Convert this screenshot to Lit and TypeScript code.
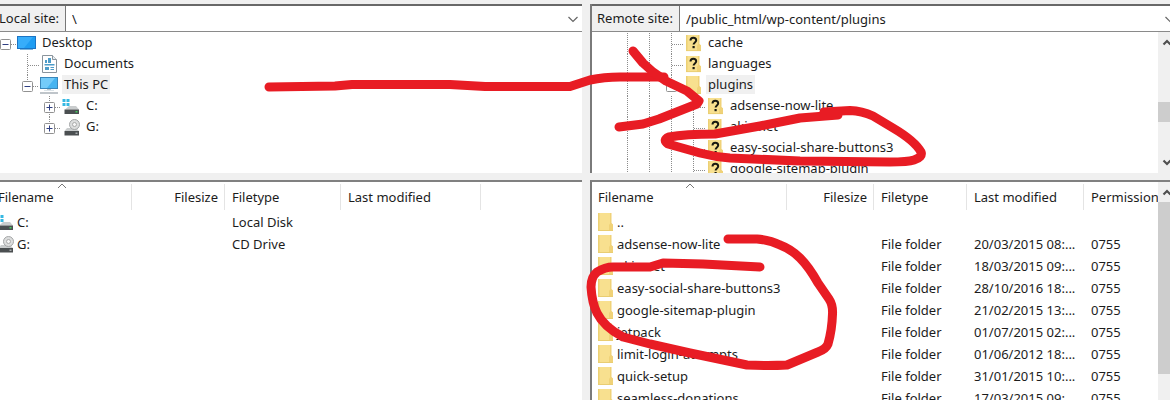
import { LitElement, html, svg, css, nothing } from "lit";
import { customElement, property } from "lit/decorators.js";

type Guide = "blank" | "line" | "tee" | "root" | "minus" | "plus" | "plus-last";
type Icon = "monitor" | "document" | "pc" | "disk" | "cd" | "folder" | "unknown";

interface Node {
  guides: Guide[];
  icon: Icon;
  name: string;
  selected?: boolean;
}

interface Entry {
  icon: Icon;
  name: string;
  size?: string;
  type?: string;
  modified?: string;
  permissions?: string;
}

const LOCAL_TREE: Node[] = [
  { guides: ["root"], icon: "monitor", name: "Desktop" },
  { guides: ["blank", "tee"], icon: "document", name: "Documents" },
  { guides: ["blank", "minus"], icon: "pc", name: "This PC", selected: true },
  { guides: ["blank", "blank", "plus"], icon: "disk", name: "C:" },
  { guides: ["blank", "blank", "plus-last"], icon: "cd", name: "G:" },
];

const REMOTE_TREE: Node[] = [
  { guides: ["blank", "line", "line", "tee"], icon: "unknown", name: "cache" },
  { guides: ["blank", "line", "line", "tee"], icon: "unknown", name: "languages" },
  { guides: ["blank", "line", "line", "minus"], icon: "folder", name: "plugins", selected: true },
  { guides: ["blank", "line", "line", "line", "tee"], icon: "unknown", name: "adsense-now-lite" },
  { guides: ["blank", "line", "line", "line", "tee"], icon: "unknown", name: "akismet" },
  { guides: ["blank", "line", "line", "line", "tee"], icon: "unknown", name: "easy-social-share-buttons3" },
  { guides: ["blank", "line", "line", "line", "tee"], icon: "unknown", name: "google-sitemap-plugin" },
];

const LOCAL_FILES: Entry[] = [
  { icon: "disk", name: "C:", type: "Local Disk" },
  { icon: "cd", name: "G:", type: "CD Drive" },
];

const dir = (name: string, modified: string): Entry => ({
  icon: "folder", name, type: "File folder", modified, permissions: "0755",
});

const REMOTE_FILES: Entry[] = [
  { icon: "folder", name: ".." },
  dir("adsense-now-lite", "20/03/2015 08:..."),
  dir("akismet", "18/03/2015 09:..."),
  dir("easy-social-share-buttons3", "28/10/2016 18:..."),
  dir("google-sitemap-plugin", "21/02/2015 13:..."),
  dir("jetpack", "01/07/2015 02:..."),
  dir("limit-login-attempts", "01/06/2012 18:..."),
  dir("quick-setup", "31/01/2015 10:..."),
  dir("seamless-donations", "17/03/2015 09:..."),
];

const folderShape = svg`
  <path d="M3 1h13v10l2 2v6H3z" fill="#f8e08f"/>
  <path d="M3 1h1.500v18H3z" fill="#ecd074"/>
  <path d="M15 1h1.500v10l1.500 1.500v6.500h-4v-6l1-1.500z" fill="#f0d278"/>
  <path d="M3 18h15v1H3z" fill="#e9cd72"/>`;

const ICONS: Record<Icon, unknown> = {
  monitor: svg`
    <path d="M0 3h19v13H0z" fill="#1b74c4"/>
    <path d="M1 4h17v11H1z" fill="#1f9df2"/>
    <path d="M1 4h15L7 15H1z" fill="#37adfa"/>
    <path d="M3 16h13v1H3z" fill="#7db4dc"/>`,
  document: svg`
    <path d="M3.500 1.500h10l4 4v13h-14z" fill="#fff" stroke="#8a949c"/>
    <path d="M13.500 1.500v4h4" fill="#e8edf0" stroke="#8a949c"/>
    <path d="M9 4h3v5H9zM6 6h2v3H6zM5.500 10h10v1.500h-10zM6 13h4v3H6zM11.500 13h3.500v1h-3.500zM11.500 15h3.500v1h-3.500z" fill="#4d9cc9"/>`,
  pc: svg`
    <path d="M1 2h18v12H1z" fill="#3a87bb"/>
    <path d="M2 3h16v10H2z" fill="#46b4f1"/>
    <path d="M2 3h14L8 13H2z" fill="#74cbf9"/>
    <path d="M8 14h4v1.500H8z" fill="#b9c6ce"/>
    <path d="M5 15h10v1H5z" fill="#dbe3e8"/>
    <path d="M1 17.500h18v1H1z" fill="#7f8b94"/>`,
  disk: svg`
    <path d="M1.500 3h3v3h-3zM5.500 3h3v3h-3zM1.500 7h3v3h-3zM5.500 7h3v3h-3z" fill="#35b8e2"/>
    <path d="M8 10h7l3 3.500H4z" fill="#c9cccd"/>
    <path d="M3.500 13.500H18V18H3.500z" fill="#4b4f51"/>
    <path d="M14.500 15h2v1.500h-2z" fill="#45c95b"/>`,
  cd: svg`
    <path d="M6 11h9l3 3H3.500z" fill="#c9cccd"/>
    <circle cx="13.500" cy="7.500" r="5" fill="#dcdddd" stroke="#a5a7a8"/>
    <circle cx="13.500" cy="7.500" r="2" fill="#f7f7f7" stroke="#aaa"/>
    <path d="M3.500 14H18v4.500H3.500z" fill="#4b4f51"/>
    <path d="M14.500 15.500h2V17h-2z" fill="#a8adaf"/>`,
  folder: folderShape,
  unknown: svg`<g transform="translate(0 1) scale(1 .9)">${folderShape}</g>
    <path d="M7.500 7.500C7.500 5.400 8.700 4.700 10.300 4.700c1.800 0 2.900 1 2.900 2.500 0 2.200-2.600 2.300-2.600 4.300" fill="none" stroke="#1a1a12" stroke-width="2"/>
    <path d="M9.500 13h2.200v2.200H9.500z" fill="#1a1a12"/>`,
};

const icon = (name: Icon) =>
  html`<svg class="icon" viewBox="0 0 20 20" aria-hidden="true">${ICONS[name]}</svg>`;

const dots = (d: string) =>
  svg`<path d=${d} fill="none" stroke="#8c8c8c" stroke-dasharray="1 1"/>`;

const box = (plus: boolean) => svg`
  <rect x="6.500" y="6.500" width="10" height="10" rx="1" fill="#fff" stroke="#919191"/>
  <path d=${plus ? "M8.500 11.500h6M11.500 8.500v6" : "M8.500 11.500h6"} stroke="#2f3f82" fill="none"/>`;

const GUIDES: Record<Guide, unknown> = {
  blank: nothing,
  line: dots("M11.500 0v21"),
  tee: svg`${dots("M11.500 0v21")}${dots("M12 11.500h11")}`,
  root: svg`${dots("M17 11.500h5")}${box(false)}`,
  minus: svg`${dots("M11.500 0v6")}${dots("M17 11.500h6")}${box(false)}`,
  plus: svg`${dots("M11.500 0v21")}${dots("M17 11.500h6")}${box(true)}`,
  "plus-last": svg`${dots("M11.500 0v6")}${dots("M17 11.500h6")}${box(true)}`,
};

const chevron = html`<svg class="chevron" viewBox="0 0 12 12" aria-hidden="true">
  <path d="M1.500 4l4.500 4.500L10.500 4" fill="none" stroke="#666" stroke-width="1.200"/></svg>`;

const arrow = (up: boolean) => html`<svg class="arrow" viewBox="0 0 18 20" aria-hidden="true">
  <path d=${up ? "M5.500 12.500l3.500-3.500 3.500 3.500" : "M5.500 7.500L9 11l3.500-3.500"} fill="none" stroke="#505050" stroke-width="2.200"/></svg>`;

@customElement("site-bar")
class SiteBar extends LitElement {
  @property() label = "";
  @property() path = "";

  static styles = css`
    :host { display: flex; height: 25px; border-top: 2px solid #686868; border-bottom: 1px solid #8a8a8a; background: #fff; }
    label { flex: none; padding: 0 6px 0 var(--label-inset, 5px); background: #f0f0f0; border-right: 1px solid #777; line-height: 25px; }
    .combo { flex: 1; display: grid; align-items: center; min-width: 0; }
    .combo > * { grid-area: 1 / 1; }
    select { width: 100%; height: 25px; padding: 0 24px 0 6px; border: 0; outline: 0; appearance: none; background: transparent; color: inherit; font: inherit; }
    .chevron { width: 12px; height: 12px; justify-self: end; margin-right: var(--chevron-inset, 3px); pointer-events: none; }
  `;

  render() {
    return html`
      <label for="path">${this.label}</label>
      <div class="combo">
        <select id="path"><option>${this.path}</option></select>
        ${chevron}
      </div>`;
  }
}

@customElement("folder-tree")
class FolderTree extends LitElement {
  @property({ attribute: false }) nodes: Node[] = [];

  static styles = css`
    :host { display: block; overflow: hidden; }
    ul { margin: 0; padding: 1px 0 0; list-style: none; }
    li { display: flex; align-items: flex-start; height: 21px; margin-left: var(--tree-inset, 0); white-space: nowrap; }
    .guide { flex: none; width: 22px; height: 21px; overflow: visible; display: block; }
    button { flex: none; padding: 0; border: 0; background: none; }
    .icon { flex: none; width: 20px; height: 20px; margin-left: 1px; margin-right: 3px; }
    .name { padding: 0 2px; line-height: 19px; }
    .selected { background: #f0f0f0; }
  `;

  private guide(g: Guide) {
    const drawing = html`<svg class="guide" viewBox="0 0 22 21" aria-hidden="true">${GUIDES[g]}</svg>`;
    return ["root", "minus", "plus", "plus-last"].includes(g)
      ? html`<button aria-label=${g.startsWith("plus") ? "Expand" : "Collapse"}>${drawing}</button>`
      : drawing;
  }

  render() {
    return html`<ul role="tree">
      ${this.nodes.map((n) => html`<li role="treeitem" aria-selected=${n.selected ? "true" : "false"}>
        ${n.guides.map((g) => this.guide(g))}${icon(n.icon)}
        <span class="name ${n.selected ? "selected" : ""}">${n.name}</span>
      </li>`)}
    </ul>`;
  }
}

@customElement("file-list")
class FileList extends LitElement {
  @property({ attribute: false }) entries: Entry[] = [];
  @property({ type: Boolean }) remote = false;

  static styles = css`
    :host { display: block; overflow: hidden; min-width: 0; }
    table { width: 100%; table-layout: fixed; border-collapse: collapse; }
    .local { margin-left: -8px; }
    .local .c-name { width: 140px; }
    .local .c-size { width: 93px; }
    .local .c-type { width: 116px; }
    .local .c-date { width: 140px; }
    .remote .c-name { width: 195px; }
    .remote .c-size { width: 87px; }
    .remote .c-type { width: 93px; }
    .remote .c-date { width: 117px; }
    th, td { padding: 0 7px; font-weight: 400; text-align: left; white-space: nowrap; overflow: hidden; }
    th:first-child, td:first-child { padding-left: 6px; }
    th { position: relative; height: 28px; padding-top: 1px; background: linear-gradient(#e4e4e4, #e4e4e4) right 2px / 1px 26px no-repeat; }
    th:last-child { background: none; padding-right: 0; }
    td { height: 22px; }
    .num { text-align: right; }
    .sort { display: block; padding: 0; border: 0; background: none; color: inherit; font: inherit; }
    .caret { position: absolute; top: 1px; left: 50%; width: 10px; height: 6px; margin-left: -5px; }
    .entry { display: flex; align-items: center; height: 22px; }
    .icon { flex: none; width: 20px; height: 20px; margin: 0 2px 0 -3px; }
  `;

  render() {
    return html`<table class=${this.remote ? "remote" : "local"}>
      <colgroup>
        <col class="c-name"><col class="c-size"><col class="c-type"><col class="c-date"><col>
      </colgroup>
      <thead><tr>
        <th aria-sort="ascending"><button class="sort">Filename</button>
          <svg class="caret" viewBox="0 0 10 6" aria-hidden="true"><path d="M1 5l4-4 4 4" fill="none" stroke="#777"/></svg></th>
        <th class="num">Filesize</th><th>Filetype</th><th>Last modified</th>
        <th>${this.remote ? "Permission" : nothing}</th>
      </tr></thead>
      <tbody>
        ${this.entries.map((e) => html`<tr>
          <td><span class="entry">${icon(e.icon)}${e.name}</span></td>
          <td class="num">${e.size}</td><td>${e.type}</td><td>${e.modified}</td><td>${e.permissions}</td>
        </tr>`)}
      </tbody>
    </table>`;
  }
}

@customElement("app-root")
class AppRoot extends LitElement {
  static styles = css`
    :host {
      display: block; position: relative; height: 100vh; overflow: hidden;
      background: #f0f0f0; color: #1c1c1c; font: 13px/20px "Noto Sans", "Open Sans", sans-serif;
    }
    .panes {
      box-sizing: border-box; height: 100%; padding-top: 4px;
      display: grid; grid-template: 169px minmax(0, 1fr) / minmax(0, 582fr) minmax(0, 580fr); gap: 7px 8px;
    }
    .pane { display: flex; flex-direction: column; min-width: 0; overflow: hidden; background: #fff; }
    .right { border-left: 2px solid #7a7a7a; }
    .list { border-top: 2px solid #808080; }
    .body { flex: 1; display: flex; min-height: 0; }
    .body > :first-child { flex: 1; }
    .left { --label-inset: 0px; --tree-inset: -6px; }
    .left site-bar { text-indent: -1px; }
    .right { --tree-inset: 2px; --chevron-inset: -6px; }
    .scroll { flex: none; width: 12px; overflow: hidden; background: #f0f0f0; display: flex; flex-direction: column; }
    .arrow { flex: none; width: 18px; height: 20px; display: block; }
    .before { flex: 50 0 0; }
    .thumb { flex: 20 0 0; background: #cdcdcd; }
    .after { flex: 31 0 0; }
    .list .before { flex: 0 0 0; }
    .list .thumb { flex: 172 0 0; }
    .list .after { flex: 26 0 0; }
    .marks { position: absolute; top: 0; left: 0; width: 100%; height: 400px; pointer-events: none; }
  `;

  render() {
    const track = (end: boolean) => html`<div class="scroll" aria-hidden="true">
      ${arrow(true)}<div class="before"></div><div class="thumb"></div><div class="after"></div>
      ${end ? arrow(false) : nothing}</div>`;
    return html`
      <main class="panes">
        <section class="pane left">
          <site-bar label="Local site:" path="\\"></site-bar>
          <div class="body"><folder-tree .nodes=${LOCAL_TREE}></folder-tree></div>
        </section>
        <section class="pane right">
          <site-bar label="Remote site:" path="/public_html/wp-content/plugins"></site-bar>
          <div class="body"><folder-tree .nodes=${REMOTE_TREE}></folder-tree>${track(true)}</div>
        </section>
        <section class="pane list left">
          <div class="body"><file-list .entries=${LOCAL_FILES}></file-list></div>
        </section>
        <section class="pane list right">
          <div class="body"><file-list remote .entries=${REMOTE_FILES}></file-list>${track(false)}</div>
        </section>
      </main>
      <svg class="marks" viewBox="0 0 1170 400" preserveAspectRatio="none" aria-hidden="true">
        <g fill="none" stroke="#e81c24" stroke-width="9" stroke-linecap="round" stroke-linejoin="round">
          <path d="M269 87L335 86L352 84.500H450L485 86.500H570L590 80Q604 77 620 77H664"/>
          <path d="M633 51L643 63L653 72L666 81L687 91L699 101L697 104L659 119L643 124L619 127"/>
          <path d="M838 114L824 112L850 110.500Q862 111 873 116L893 128Q915 141 921 152Q923 157 914 160Q908 162 890 162L800 161L730 158Q715 157 700 153L668 144Q662 140 669 137Q685 134 715 134L760 126L800 118L838 115"/>
          <path d="M728 239H757Q770 240 780 245Q791 249 800 258Q809 267 818 283L829 299Q833 305 832.500 314Q832 330 828 344Q826 349 818 352L787 365Q768 366 747 365L690 353L650 344L623 337Q604 327 597 313Q592 303 591 287Q591 277 597 272Q605 267 613 267H650L663 263L703 264L760 267"/>
        </g>
      </svg>`;
  }
}
